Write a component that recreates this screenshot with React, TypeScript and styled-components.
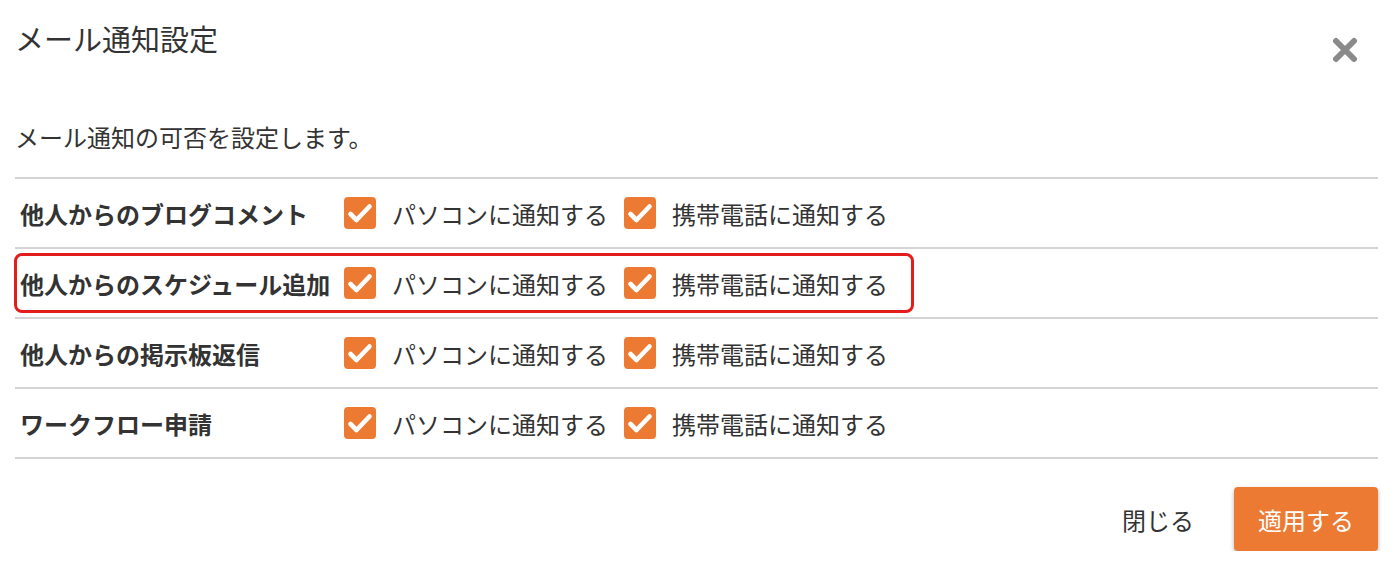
import React, { FC, useState } from "react";
import styled, { createGlobalStyle } from "styled-components";

interface Setting {
  id: string;
  label: string;
  highlighted?: boolean;
}

const settings: Setting[] = [
  { id: "blog", label: "他人からのブログコメント" },
  { id: "schedule", label: "他人からのスケジュール追加", highlighted: true },
  { id: "board", label: "他人からの掲示板返信" },
  { id: "workflow", label: "ワークフロー申請" },
];

const GlobalStyle = createGlobalStyle`
  body {
    margin: 0;
    background: #fff;
    font-family: "Noto Sans CJK JP", "Noto Sans", sans-serif;
    color: #333;
  }
`;

const CheckMark: FC = () => (
  <svg width="32" height="32" viewBox="0 0 32 32" aria-hidden>
    <path
      d="M6.5 17 L12.5 23 L25.5 9.5"
      fill="none"
      stroke="#fff"
      strokeWidth="4.6"
      strokeLinecap="round"
      strokeLinejoin="round"
    />
  </svg>
);

const CloseIcon: FC = () => (
  <svg width="26" height="26" viewBox="0 0 26 26" aria-hidden>
    <path
      d="M4 4 L22 22 M22 4 L4 22"
      stroke="#8a8a8a"
      strokeWidth="6"
      strokeLinecap="round"
    />
  </svg>
);

const Option: FC<{ text: string }> = ({ text }) => {
  const [checked, setChecked] = useState(true);
  return (
    <StyledOption>
      <HiddenInput
        type="checkbox"
        checked={checked}
        onChange={() => setChecked(!checked)}
      />
      <Box $checked={checked}>{checked && <CheckMark />}</Box>
      <span>{text}</span>
    </StyledOption>
  );
};

export default function App() {
  return (
    <>
      <GlobalStyle />
      <Dialog>
        <Header>
          <Title>メール通知設定</Title>
          <CloseButton aria-label="閉じる">
            <CloseIcon />
          </CloseButton>
        </Header>
        <Description>メール通知の可否を設定します。</Description>
        <Table>
          {settings.map((s) => (
            <Row key={s.id} $highlighted={s.highlighted}>
              <Label>{s.label}</Label>
              <Option text="パソコンに通知する" />
              <Option text="携帯電話に通知する" />
            </Row>
          ))}
        </Table>
        <Footer>
          <TextButton>閉じる</TextButton>
          <PrimaryButton>適用する</PrimaryButton>
        </Footer>
      </Dialog>
    </>
  );
}

const Dialog = styled.div`
  padding: 18px 16px 0 15px;
`;

const Header = styled.header`
  display: flex;
  justify-content: space-between;
  align-items: flex-start;
`;

const Title = styled.h1`
  margin: 0;
  font-size: 29px;
  font-weight: 400;
  line-height: 40px;
  color: #333;
`;

const CloseButton = styled.button`
  margin: 19px 20px 0 0;
  padding: 0;
  border: none;
  background: none;
  display: flex;
  cursor: pointer;
`;

const Description = styled.p`
  margin: 56px 0 22px;
  font-size: 24px;
  line-height: 36px;
`;

const Table = styled.div`
  border-bottom: 2px solid #d4d4d4;
`;

const Row = styled.div<{ $highlighted?: boolean }>`
  position: relative;
  display: flex;
  align-items: center;
  height: 68px;
  padding-left: 5px;
  border-top: 2px solid #d4d4d4;

  &::after {
    content: "";
    display: ${(p) => (p.$highlighted ? "block" : "none")};
    position: absolute;
    top: 4px;
    bottom: 4px;
    left: -1px;
    width: 900px;
    box-sizing: border-box;
    border: 3px solid #e31c1c;
    border-radius: 8px;
    pointer-events: none;
  }
`;

const Label = styled.div`
  width: 324px;
  font-size: 24px;
  font-weight: 700;
  white-space: nowrap;
`;

const StyledOption = styled.label`
  display: flex;
  align-items: center;
  gap: 16px;
  margin-right: 16px;
  font-size: 24px;
  cursor: pointer;
`;

const HiddenInput = styled.input`
  display: none;
`;

const Box = styled.span<{ $checked: boolean }>`
  display: flex;
  width: 32px;
  height: 32px;
  border-radius: 4px;
  background: ${(p) => (p.$checked ? "#ed7a33" : "#fff")};
  border: ${(p) => (p.$checked ? "none" : "2px solid #bbb")};
  box-sizing: border-box;
`;

const Footer = styled.footer`
  display: flex;
  justify-content: flex-end;
  align-items: center;
  gap: 20px;
  padding-top: 28px;
`;

const TextButton = styled.button`
  padding: 0 20px;
  height: 64px;
  border: none;
  background: none;
  font-family: inherit;
  font-size: 24px;
  color: #333;
  cursor: pointer;
`;

const PrimaryButton = styled.button`
  width: 144px;
  height: 64px;
  border: none;
  border-radius: 4px;
  background: #ed7a33;
  color: #fff;
  font-family: inherit;
  font-size: 24px;
  box-shadow: 0 2px 4px rgba(0, 0, 0, 0.3);
  cursor: pointer;
`;
